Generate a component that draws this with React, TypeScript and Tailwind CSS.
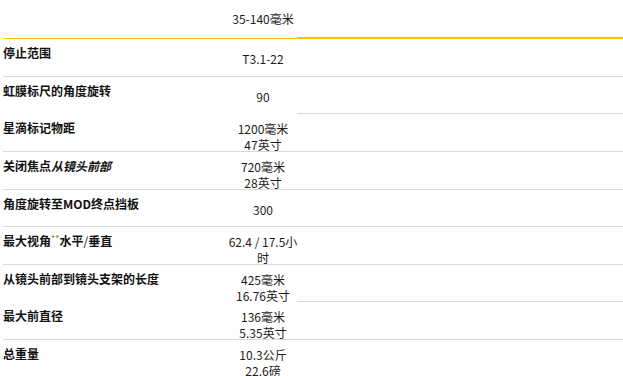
import type { ReactNode } from 'react';

type SpecRow = {
  label: ReactNode;
  values: string[];
  height: string;
  leftBorder: boolean;
};

const rows: SpecRow[] = [
  { label: '停止范围', values: ['T3.1-22'], height: 'h-[38px]', leftBorder: true },
  { label: '虹膜标尺的角度旋转', values: ['90'], height: 'h-[37px]', leftBorder: false },
  { label: '星滴标记物距', values: ['1200毫米', '47英寸'], height: 'h-[38px]', leftBorder: true },
  {
    label: (
      <>
        关闭焦点<span className="italic">从镜头前部</span>
      </>
    ),
    values: ['720毫米', '28英寸'],
    height: 'h-[38px]',
    leftBorder: true,
  },
  { label: '角度旋转至MOD终点挡板', values: ['300'], height: 'h-[37px]', leftBorder: true },
  {
    label: (
      <>
        最大视角<sup className="text-[9px] font-normal text-[#8f8352]">**</sup>水平<span className="font-normal">/</span>垂直
      </>
    ),
    values: ['62.4 / 17.5小', '时'],
    height: 'h-[38px]',
    leftBorder: true,
  },
  { label: '从镜头前部到镜头支架的长度', values: ['425毫米', '16.76英寸'], height: 'h-[37px]', leftBorder: false },
  { label: '最大前直径', values: ['136毫米', '5.35英寸'], height: 'h-[38px]', leftBorder: true },
  { label: '总重量', values: ['10.3公斤', '22.6磅'], height: 'h-[38px]', leftBorder: true },
];

export default function App() {
  return (
    <div
      className="min-h-[376px] w-[623px] overflow-hidden bg-white pl-[3px] text-[12px] text-[#1c1c1c]"
      style={{ fontFamily: '"Noto Sans CJK SC", "Noto Sans", sans-serif' }}
    >
      {/* header row: focal length */}
      <div className="flex h-[39px]">
        <div className="flex border-b border-[#fcc400]">
          <div className="w-[226px]" />
          <div className="w-[68px] pt-[11px] text-center leading-[15px] whitespace-nowrap">35-140毫米</div>
        </div>
        <div className="flex-1 border-b-2 border-[#fcc400]" />
      </div>

      {rows.map((row, i) => (
        <div key={i} className={`flex ${row.height}`}>
          <div className={`flex ${row.leftBorder ? 'border-b border-[#d9d9d9]' : ''}`}>
            <div className="w-[226px] pt-[6px] font-bold leading-[15px] text-[#111]">{row.label}</div>
            <div
              className={`flex w-[68px] flex-col items-center whitespace-nowrap ${
                row.values.length > 1 ? 'pt-[7px] leading-[15.5px]' : 'pt-[12px] leading-[15px]'
              }`}
            >
              {row.values.map((v) => (
                <div key={v}>{v}</div>
              ))}
            </div>
          </div>
          <div className="flex-1 border-b border-[#d9d9d9]" />
        </div>
      ))}
    </div>
  );
}
